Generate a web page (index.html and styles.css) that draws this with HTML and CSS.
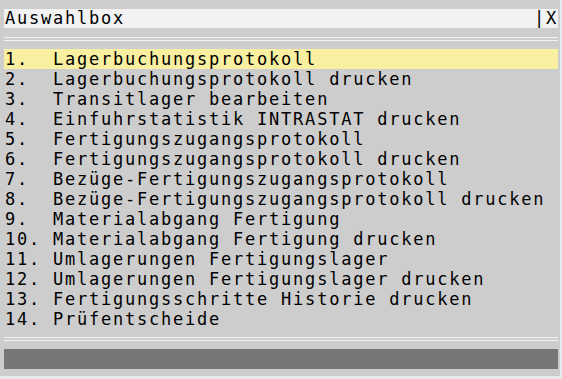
FILE: index.html
```html
<!DOCTYPE html>
<html lang="de">
<head>
<meta charset="utf-8">
<title>Auswahlbox</title>
<link rel="stylesheet" href="styles.css">
</head>
<body>
<div class="window">
  <div class="titlebar"><span class="title">Auswahlbox</span><span class="close">|X</span></div>
  <div class="sep"></div>
  <ul class="list">
    <li class="item selected">1.  Lagerbuchungsprotokoll</li>
    <li class="item">2.  Lagerbuchungsprotokoll drucken</li>
    <li class="item">3.  Transitlager bearbeiten</li>
    <li class="item">4.  Einfuhrstatistik INTRASTAT drucken</li>
    <li class="item">5.  Fertigungszugangsprotokoll</li>
    <li class="item">6.  Fertigungszugangsprotokoll drucken</li>
    <li class="item">7.  Bezüge-Fertigungszugangsprotokoll</li>
    <li class="item">8.  Bezüge-Fertigungszugangsprotokoll drucken</li>
    <li class="item">9.  Materialabgang Fertigung</li>
    <li class="item">10. Materialabgang Fertigung drucken</li>
    <li class="item">11. Umlagerungen Fertigungslager</li>
    <li class="item">12. Umlagerungen Fertigungslager drucken</li>
    <li class="item">13. Fertigungsschritte Historie drucken</li>
    <li class="item">14. Prüfentscheide</li>
  </ul>
  <div class="sep"></div>
  <div class="status"></div>
</div>
</body>
</html>
```
FILE: styles.css
```css
html, body {
  margin: 0;
  padding: 0;
}
body {
  background: #cdcdcd;
}
.window {
  box-sizing: border-box;
  width: 562px;
  height: 379px;
  background: #cdcdcd;
  border-right: 2px solid #e6e8ef;
  border-bottom: 3px solid #ebebeb;
  padding: 9px 2px 0 4px;
  font-family: "DejaVu Sans Mono", monospace;
  font-size: 17px;
  letter-spacing: 1.77px;
  color: #000;
}
.titlebar {
  height: 19px;
  line-height: 19px;
  background: #f2f2f2;
  display: flex;
  justify-content: space-between;
  white-space: pre;
  padding-left: 1px;
}
.sep {
  height: 2px;
  margin-top: 9px;
  border-top: 1px solid #f3f3f3;
  border-bottom: 1px solid #f3f3f3;
}
.list {
  list-style: none;
  margin: 8px 0 0 0;
  padding: 0;
}
.item {
  height: 20px;
  line-height: 20px;
  white-space: pre;
  padding-left: 1px;
}
.selected {
  background: #f8f0a0;
}
.list + .sep {
  margin-top: 8px;
}
.status {
  height: 20px;
  margin-top: 8px;
  background: #777777;
}
```
